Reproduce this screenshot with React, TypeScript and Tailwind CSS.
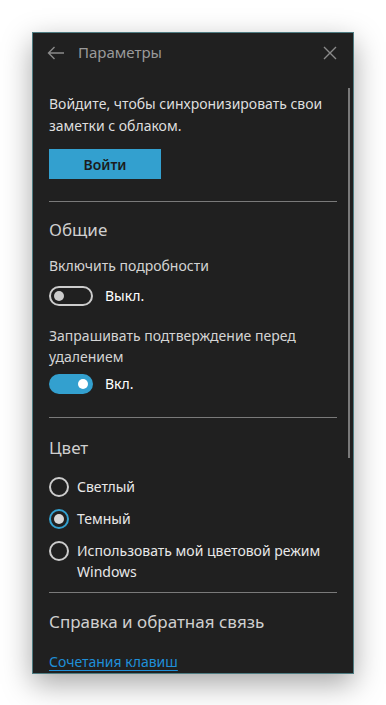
import React from "react";

const font = { fontFamily: '"Noto Sans", "Open Sans", sans-serif' };

function Toggle({ on }: { on: boolean }) {
  return on ? (
    <div className="w-[44px] h-[20px] rounded-full bg-[#33a0cf] flex items-center justify-end pr-[5px]">
      <div className="w-[10px] h-[10px] rounded-full bg-white" />
    </div>
  ) : (
    <div className="w-[44px] h-[20px] rounded-full border-2 border-[#cccccc] flex items-center pl-[3px]">
      <div className="w-[10px] h-[10px] rounded-full bg-[#cccccc]" />
    </div>
  );
}

function Radio({ checked, children }: { checked?: boolean; children: React.ReactNode }) {
  return (
    <div className="flex items-start gap-[8px]">
      <div
        className={
          "mt-[1px] w-[20px] h-[20px] shrink-0 rounded-full border-2 flex items-center justify-center " +
          (checked ? "border-[#33a0cf]" : "border-[#cccccc]")
        }
      >
        {checked && <div className="w-[10px] h-[10px] rounded-full bg-[#d8d8d8]" />}
      </div>
      <div className="text-[14px] leading-[21px] text-[#e8e8e8]">{children}</div>
    </div>
  );
}

export default function App() {
  return (
    <div className="w-[386px] h-[705px] bg-white overflow-hidden" style={font}>
      <div className="relative ml-[32px] mt-[32px] w-[322px] h-[642px] bg-[#202020] border border-[#4f7c82] overflow-hidden shadow-[0_10px_28px_rgba(0,0,0,0.35)]">
        {/* title bar */}
        <div className="h-[39px] flex items-center">
          <div className="w-[45px] flex justify-center">
            <svg width="18" height="14" viewBox="0 0 18 14" fill="none" stroke="#8a8a8a" strokeWidth="1.4">
              <path d="M17 7H1.5M7.5 1L1.5 7l6 6" />
            </svg>
          </div>
          <div className="text-[15px] text-[#9a9a9a] flex-1">Параметры</div>
          <div className="w-[46px] flex justify-center">
            <svg width="14" height="14" viewBox="0 0 14 14" fill="none" stroke="#8a8a8a" strokeWidth="1.4">
              <path d="M1 1l12 12M13 1L1 13" />
            </svg>
          </div>
        </div>

        {/* scrollbar */}
        <div className="absolute right-[3px] top-[55px] w-[2px] h-[370px] bg-[#7a7a7a]" />

        <div className="px-[16px] pt-[21px]">
          <div className="text-[14px] leading-[22px] text-[#dedede]">
            Войдите, чтобы синхронизировать свои заметки с облаком.
          </div>
          <div className="mt-[12px] w-[112px] h-[30px] bg-[#33a0cf] flex items-center justify-center text-[14px] font-semibold text-[#1c1c1c]">
            Войти
          </div>
          <div className="mt-[22px] h-px bg-[#7a7a7a]" />

          <div className="mt-[14px] text-[17px] leading-[28px] text-[#cfcfcf]">Общие</div>
          <div className="mt-[11px] text-[14px] leading-[22px] text-[#d4d4d4]">Включить подробности</div>
          <div className="mt-[8px] flex items-center gap-[12px]">
            <Toggle on={false} />
            <span className="text-[14px] text-white">Выкл.</span>
          </div>
          <div className="mt-[19px] text-[14px] leading-[21px] text-[#d4d4d4]">
            Запрашивать подтверждение перед удалением
          </div>
          <div className="mt-[6px] flex items-center gap-[12px]">
            <Toggle on={true} />
            <span className="text-[14px] text-white">Вкл.</span>
          </div>
          <div className="mt-[23px] h-px bg-[#7a7a7a]" />

          <div className="mt-[16px] text-[17px] leading-[28px] text-[#cfcfcf]">Цвет</div>
          <div className="mt-[14px] flex flex-col gap-[11px]">
            <Radio>Светлый</Radio>
            <Radio checked>Темный</Radio>
            <Radio>
              Использовать мой цветовой режим Windows
            </Radio>
          </div>
          <div className="mt-[10px] h-px bg-[#7a7a7a]" />

          <div className="mt-[15px] text-[17px] leading-[28px] text-[#cfcfcf]">Справка и обратная связь</div>
          <div className="mt-[15px] text-[14px] leading-[22px] text-[#1f8fd8] underline underline-offset-[3px]">
            Сочетания клавиш
          </div>
        </div>
      </div>
    </div>
  );
}
